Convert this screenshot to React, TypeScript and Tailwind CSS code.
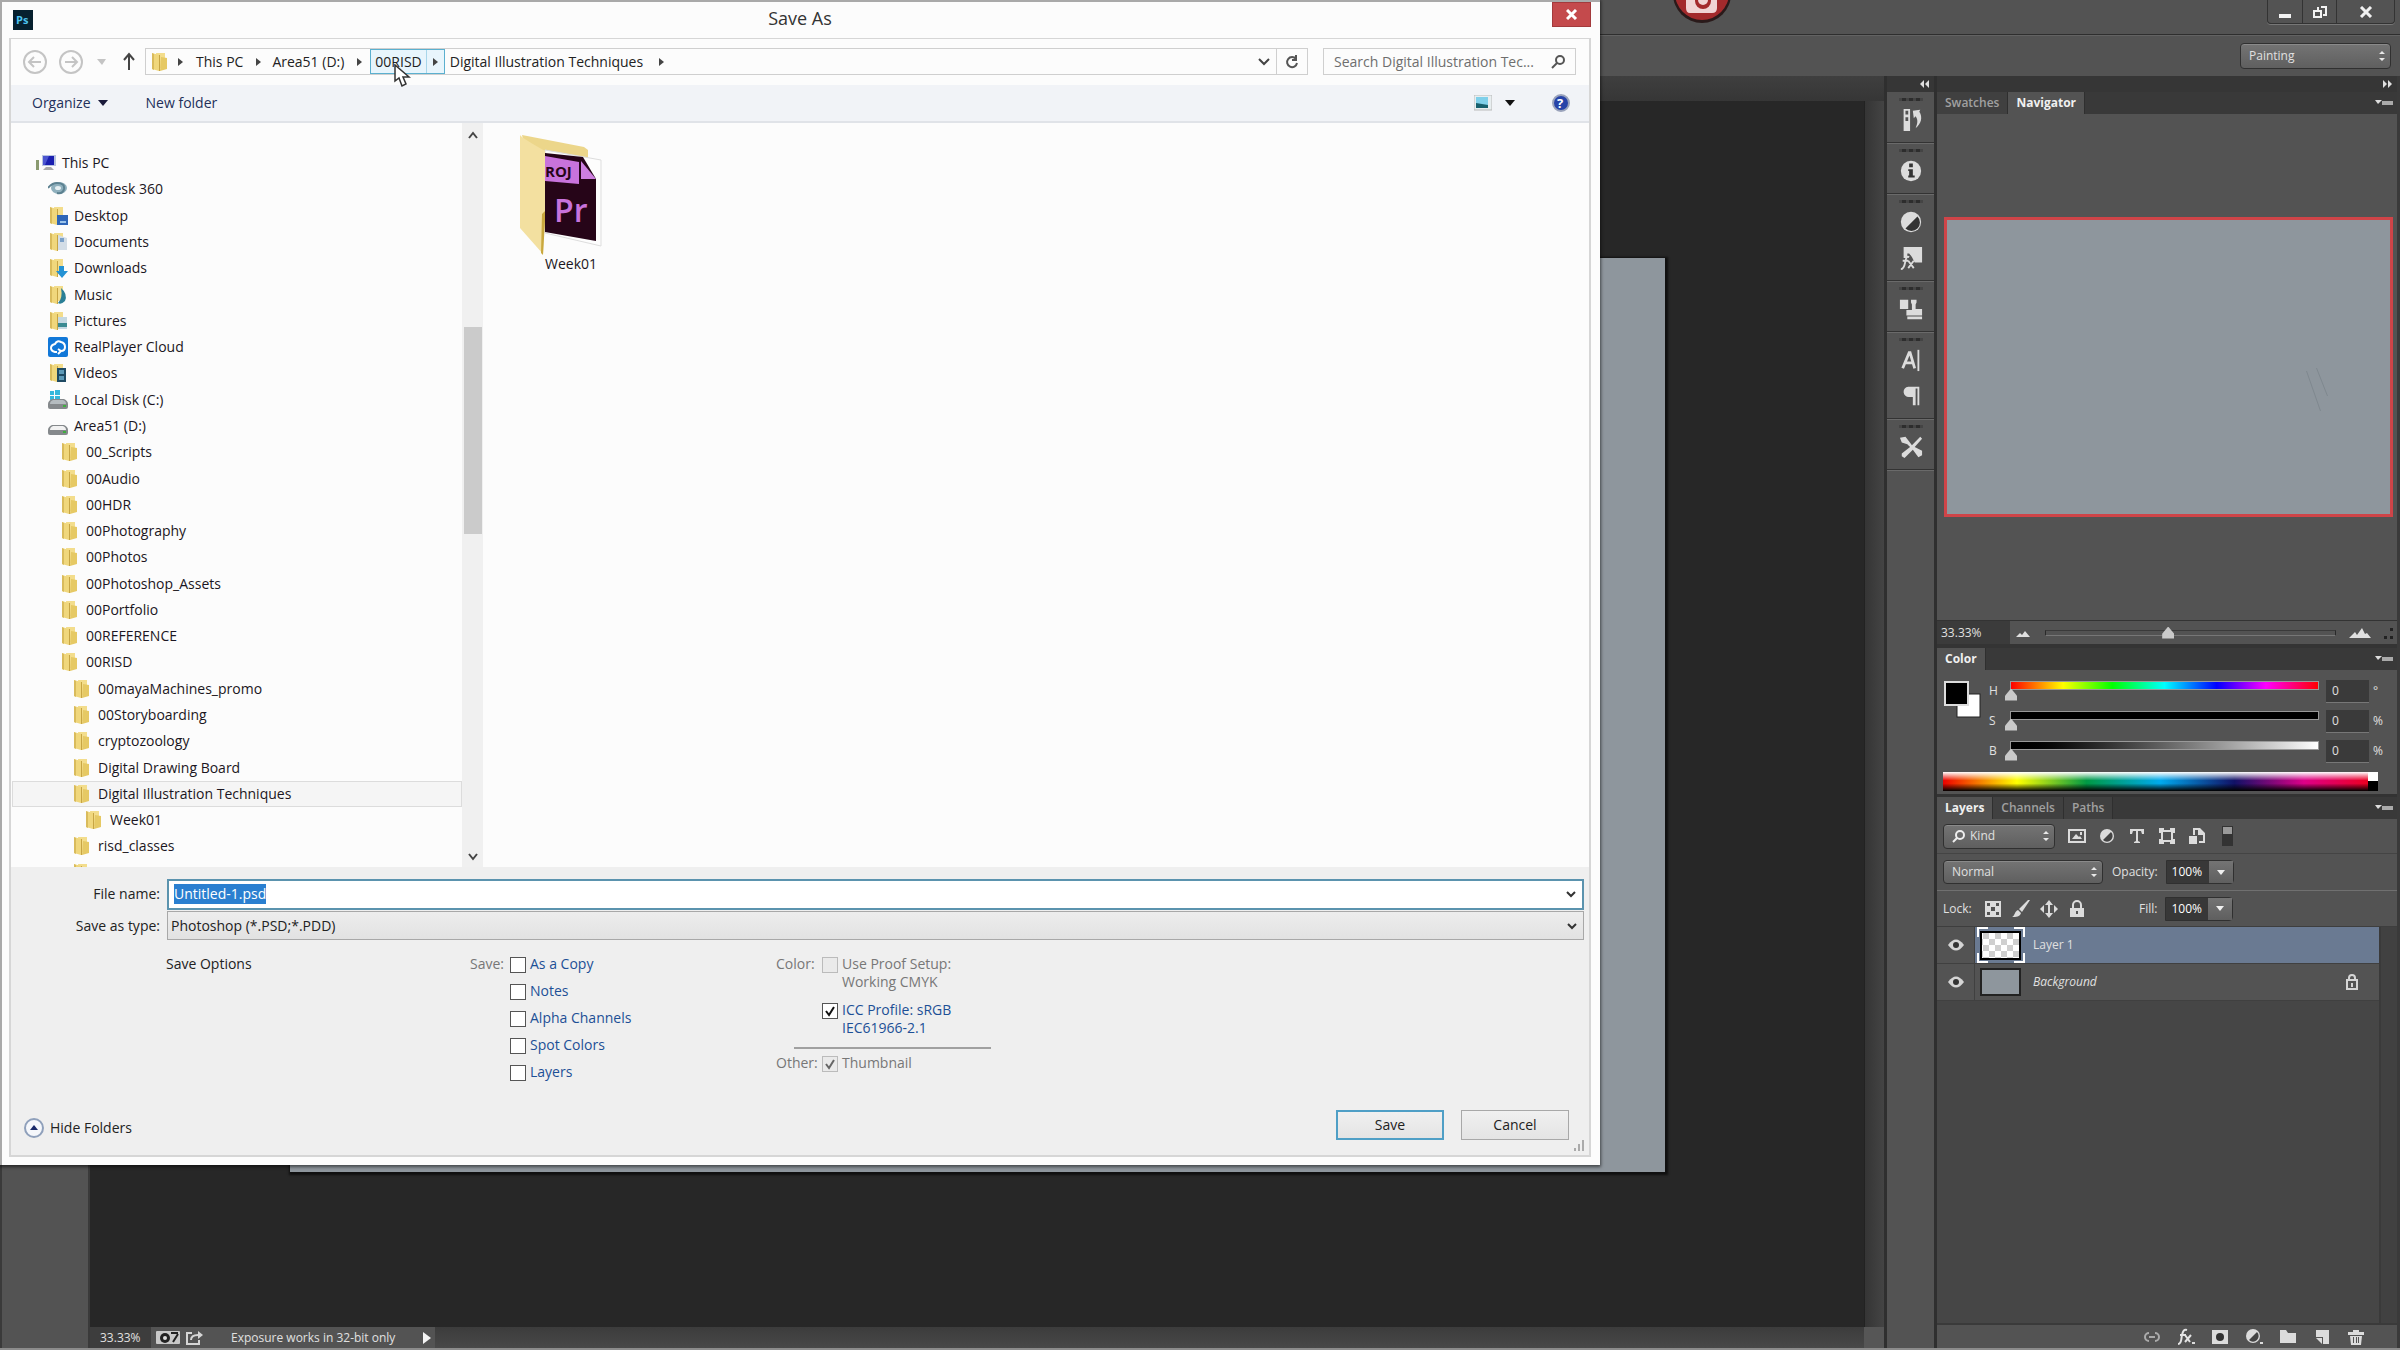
import { useEffect, useRef } from 'react';
import type { ReactNode } from 'react';

type TreeItem = { label: string; level: number; icon: string; selected?: boolean };

const tree: TreeItem[] = [
  { label: 'This PC', level: 0, icon: 'pc' },
  { label: 'Autodesk 360', level: 1, icon: 'autodesk' },
  { label: 'Desktop', level: 1, icon: 'desktop' },
  { label: 'Documents', level: 1, icon: 'documents' },
  { label: 'Downloads', level: 1, icon: 'downloads' },
  { label: 'Music', level: 1, icon: 'music' },
  { label: 'Pictures', level: 1, icon: 'pictures' },
  { label: 'RealPlayer Cloud', level: 1, icon: 'realplayer' },
  { label: 'Videos', level: 1, icon: 'videos' },
  { label: 'Local Disk (C:)', level: 1, icon: 'diskc' },
  { label: 'Area51 (D:)', level: 1, icon: 'disk' },
  { label: '00_Scripts', level: 2, icon: 'folder' },
  { label: '00Audio', level: 2, icon: 'folder' },
  { label: '00HDR', level: 2, icon: 'folder' },
  { label: '00Photography', level: 2, icon: 'folder' },
  { label: '00Photos', level: 2, icon: 'folder' },
  { label: '00Photoshop_Assets', level: 2, icon: 'folder' },
  { label: '00Portfolio', level: 2, icon: 'folder' },
  { label: '00REFERENCE', level: 2, icon: 'folder' },
  { label: '00RISD', level: 2, icon: 'folder' },
  { label: '00mayaMachines_promo', level: 3, icon: 'folder' },
  { label: '00Storyboarding', level: 3, icon: 'folder' },
  { label: 'cryptozoology', level: 3, icon: 'folder' },
  { label: 'Digital Drawing Board', level: 3, icon: 'folder' },
  { label: 'Digital Illustration Techniques', level: 3, icon: 'folder', selected: true },
  { label: 'Week01', level: 4, icon: 'folder' },
  { label: 'risd_classes', level: 3, icon: 'folder' },
  { label: 'risd_Teaching', level: 3, icon: 'folder' },
];

const indent = ['pl-[23px]', 'pl-[35px]', 'pl-[47px]', 'pl-[59px]', 'pl-[71px]'];

export default function App() {
  return (
    <main className="relative h-screen min-h-[1200px] flex flex-col overflow-hidden bg-[#535353] font-['Open_Sans','Noto_Sans',sans-serif] text-xs text-[#e0e0e0] border-b-2 border-[#8c8c8c]">
      <TopBars />
      <div className="flex flex-1 min-h-0">
        <div className="w-[90px] shrink-0 border-x-2 border-[#3a3a3a]" />
        <DocumentArea />
        <IconDock />
        <Panels />
      </div>
      <SaveDialog />
    </main>
  );
}

/* ---------- Photoshop chrome ---------- */

function TopBars() {
  return (
    <header className="shrink-0">
      <div className="relative flex justify-end h-[34px] pr-[5px]">
        <svg className="absolute left-[1672px] top-0" width="60" height="26" viewBox="0 0 60 26">
          <circle cx="30" cy="-6" r="29" fill="#2a1a1a" />
          <circle cx="30" cy="-7" r="27" fill="#a32a2c" />
          <path d="M14 0h31v8q0 5-5 5H18q-4 0-4-5z" fill="#f0d4d4" />
          <circle cx="31" cy="1" r="8" fill="#a32a2c" />
          <circle cx="31" cy="0" r="5" fill="#f0d4d4" />
        </svg>
        <div className="flex h-6 border border-t-0 border-[#333] rounded-b-sm shadow-[0_1px_0_#777]">
          <button aria-label="Minimize" className="w-[35px] grid place-items-center border-r border-[#333]">
            <svg width="14" height="14"><rect x="1" y="9" width="12" height="4" fill="#f2f2f2" /></svg>
          </button>
          <button aria-label="Restore" className="w-[34px] grid place-items-center border-r border-[#333]">
            <svg width="16" height="14" fill="none" stroke="#f2f2f2" strokeWidth="2"><path d="M2 6h7v6H2zM6 5V2M9 2h5v8h-3" /></svg>
          </button>
          <button aria-label="Close Photoshop" className="w-[57px] grid place-items-center">
            <svg width="14" height="12" stroke="#f2f2f2" strokeWidth="3"><path d="M2 1l10 10M12 1L2 11" /></svg>
          </button>
        </div>
      </div>
      <div className="flex items-center justify-end h-[42px] pr-[9px] border-t border-[#2e2e2e] shadow-[inset_0_1px_0_#626262]">
        <DarkSelect label="Workspace" value="Painting" className="w-[151px] h-[26px]" />
      </div>
    </header>
  );
}

function DarkSelect({ label, value, className, icon }: { label: string; value: string; className: string; icon?: ReactNode }) {
  return (
    <div className={'relative flex items-center rounded-sm border border-[#303030] bg-linear-to-b from-[#747474] to-[#5f5f5f] shadow-[inset_0_1px_0_#8a8a8a] ' + className}>
      {icon}
      <select aria-label={label} className="flex-1 h-full w-full appearance-none bg-transparent pl-2 outline-none">
        <option>{value}</option>
      </select>
      <svg className="absolute right-1 pointer-events-none" width="8" height="14" fill="#e8e8e8"><path d="M4 2l3 3H1zM4 12L1 9h6z" /></svg>
    </div>
  );
}

function DocumentArea() {
  return (
    <section className="flex flex-1 flex-col min-w-0">
      <div className="h-[25px] shrink-0 bg-linear-to-b from-[#3f3f3f] to-[#363636]" />
      <div className="flex flex-1 min-h-0">
        <div className="flex-1 min-w-0 bg-[#272727] pt-[157px] pb-[155px] pl-[200px] pr-[199px]">
          <div className="h-full bg-[#8e969d] shadow-[1px_1px_2px_2px_#101010]" />
        </div>
        <div className="w-5 shrink-0 bg-linear-to-r from-[#353535] to-[#444] border-l border-[#222]" />
      </div>
      <div className="flex h-[21px] shrink-0 bg-linear-to-b from-[#3c3c3c] to-[#484848]">
        <input aria-label="Zoom level" defaultValue="33.33%" className="w-[61px] pl-[10px] bg-[#3d3d3d] outline-none" />
        <div className="flex items-center w-[284px] bg-[#535353] pl-[5px]">
          <svg width="24" height="14"><rect width="24" height="13" rx="1" fill="#c9c9c9" /><circle cx="9" cy="7" r="5" fill="#222" /><circle cx="9" cy="7" r="2" fill="#ddd" /><path d="M15 2h7M17 11l5-8" stroke="#222" strokeWidth="2" /></svg>
          <svg className="ml-[6px]" width="18" height="15" fill="none" stroke="#d5d5d5" strokeWidth="2"><path d="M6 3H1v11h12v-4M5 10c0-4 3-5 7-5" /><path d="M12 1l5 4-5 4z" fill="#d5d5d5" stroke="none" /></svg>
          <span className="ml-[27px] text-xs whitespace-nowrap">Exposure works in 32-bit only</span>
          <svg className="ml-auto mr-1" width="8" height="12"><path d="M0 0l8 6-8 6z" fill="#f5f5f5" /></svg>
        </div>
        <div className="ml-auto w-5 bg-[#565656]" />
      </div>
    </section>
  );
}

function DockGroup({ children }: { children: ReactNode }) {
  return (
    <div className="flex flex-col items-center pt-[5px] pb-[4px] border-b border-[#333] shadow-[0_1px_0_#6a6a6a]">
      <svg width="24" height="5" fill="#2d2d2d"><path d="M0 1h24v3H0z" fill="#444" /><path d="M3 1h4v3H3zM10 1h4v3h-4zM17 1h4v3h-4z" /></svg>
      {children}
    </div>
  );
}

function DockButton({ label, children }: { label: string; children: ReactNode }) {
  return (
    <button aria-label={label} className="grid place-items-center size-9">
      <svg width="24" height="24" viewBox="0 0 26 26" fill="#dcdcdc">{children}</svg>
    </button>
  );
}

function IconDock() {
  return (
    <aside className="w-[53px] shrink-0 flex flex-col border-x-3 border-[#2f2f2f]">
      <div className="flex items-center justify-end h-4 pr-1 shrink-0 bg-[#363636]">
        <svg width="10" height="8" fill="#e0e0e0"><path d="M4 0v8L0 4zM9 0v8L5 4z" /></svg>
      </div>
      <DockGroup>
        <DockButton label="History">
          <path d="M5 1h7v24H5zM7 3v4h3V3zM7 10v4h3v-4z" fillRule="evenodd" />
          <path d="M15 3l8-1-1 2c4 6 2 13-4 18 2-5 3-9 0-13l-2 2z" />
        </DockButton>
      </DockGroup>
      <DockGroup>
        <DockButton label="Info">
          <circle cx="13" cy="13" r="11" />
          <path d="M11 5h4v4h-4zM10 11h5v7h2v2h-7v-2h1v-5h-1z" fill="#333" />
        </DockButton>
      </DockGroup>
      <DockGroup>
        <DockButton label="Adjustments">
          <circle cx="13" cy="13" r="11" />
          <path d="M20 7a9 9 0 0 1-13 13z" fill="#333" />
        </DockButton>
        <DockButton label="Styles">
          <path d="M5 1h20v17h-8l-3-6-3-4H9v5H5z" />
          <path d="M2 25c4 0 4-5 5-9s2-5 4-4M4 16h6M10 24l6-8M10 16l6 8" fill="none" stroke="#dcdcdc" strokeWidth="2" />
        </DockButton>
      </DockGroup>
      <DockGroup>
        <DockButton label="Clone source">
          <path d="M1 3h9v10H1zM13 3h6v3l-1 2v5h7v7H8v-6h6V8l-1-2zM9 21h16v3H9z" />
        </DockButton>
      </DockGroup>
      <DockGroup>
        <DockButton label="Character">
          <path d="M4 22l7-17h1l5 17M7 16h8" fill="none" stroke="#dcdcdc" strokeWidth="3" />
          <path d="M20 2h2v23h-2z" />
        </DockButton>
        <DockButton label="Paragraph">
          <path d="M10 3h12v20h-2V5h-2v18h-3v-9h-4a5 5 0 0 1-1-11z" />
        </DockButton>
      </DockGroup>
      <DockGroup>
        <DockButton label="Tool presets">
          <path d="M1 3l6-1 4 5 3 4 9-9 2 2-8 9 8 4v5l-4 2-6-8-9 9-3-2v-3l9-7-3-3-6-2z" />
        </DockButton>
      </DockGroup>
    </aside>
  );
}

function PanelTabs({ tabs, active }: { tabs: string[]; active: string }) {
  return (
    <div className="flex h-[22px] shrink-0 bg-[#393939]">
      {tabs.map(t => (
        <button
          key={t}
          className={'px-2 text-xs border-r border-[#2f2f2f] ' + (t === active ? 'font-bold bg-[#535353] text-[#f0f0f0]' : 'font-semibold bg-[#404040] text-[#a0a0a0]')}
        >
          {t}
        </button>
      ))}
      <button aria-label="Panel menu" className="ml-auto mr-1">
        <svg width="18" height="8"><path d="M0 1h7L3 5z" fill="#ddd" /><path d="M7 2h11v4H7z" fill="#aaa" /></svg>
      </button>
    </div>
  );
}

const rangeThumb =
  'appearance-none bg-transparent w-full h-[12px] outline-none [&::-webkit-slider-thumb]:appearance-none [&::-webkit-slider-thumb]:w-[12px] [&::-webkit-slider-thumb]:h-[12px] [&::-webkit-slider-thumb]:bg-[#c9c9c9] [&::-webkit-slider-thumb]:[clip-path:polygon(50%_0,100%_60%,100%_100%,0_100%,0_60%)]';

const colorRows = [
  { label: 'H', unit: '°', track: 'bg-[linear-gradient(90deg,#f00,#ff0_17%,#0f0_33%,#0ff_50%,#00f_67%,#f0f_83%,#f00)]' },
  { label: 'S', unit: '%', track: 'bg-black' },
  { label: 'B', unit: '%', track: 'bg-linear-to-r from-black to-white' },
];

function Panels() {
  return (
    <aside className="w-[463px] shrink-0 flex flex-col border-r-3 border-[#3a3a3a]">
      <div className="flex items-center justify-end h-4 pr-1 shrink-0 bg-[#363636]">
        <svg width="10" height="8" fill="#e0e0e0"><path d="M0 0v8l4-4zM5 0v8l4-4z" /></svg>
      </div>

      <PanelTabs tabs={['Swatches', 'Navigator']} active="Navigator" />
      <div className="h-[507px] shrink-0 flex items-center border-b border-[#333] pl-[7px] pr-[4px]">
        <svg className="w-full h-[300px] border-3 border-[#cf4448] bg-[#8e969d]" viewBox="0 0 442 294">
          <path d="M359 151l14 40M369 148l11 28" stroke="#7f888f" strokeWidth="1" fill="none" />
        </svg>
      </div>
      <div className="flex items-center h-[23px] shrink-0 pr-1">
        <input aria-label="Navigator zoom" defaultValue="33.33%" className="w-[73px] h-full pl-[4px] bg-[#3b3b3b] outline-none" />
        <svg className="mx-[6px]" width="14" height="8" fill="#e0e0e0"><path d="M0 8l4-4 2 2 3-4 5 6z" /></svg>
        <div className="flex-1 relative mx-[9px] flex items-center">
          <div className="absolute inset-x-0 h-[6px] border border-t-[#3a3a3a] border-x-[#2a2a2a] border-b-[#777]" />
          <input aria-label="Zoom" type="range" min="0" max="100" defaultValue="42" className={'relative ' + rangeThumb} />
        </div>
        <svg className="mx-[4px]" width="22" height="10" fill="#e0e0e0"><path d="M0 10l6-6 2 3 5-7 3 6 2-1 4 5z" /></svg>
        <svg className="ml-2 self-end mb-1" width="10" height="12" fill="#222"><path d="M7 0h3v3H7zM7 8h3v3H7zM1 8h3v3H1z" /></svg>
      </div>

      <div className="pt-[4px] bg-[#343434]"><PanelTabs tabs={['Color']} active="Color" /></div>
      <div className="h-[127px] shrink-0 px-[6px] pt-[6px] border-b-3 border-[#333]">
        <div className="flex h-[96px]">
          <svg className="mt-1" width="40" height="42"><rect x="14" y="14" width="23" height="23" fill="#fff" stroke="#222" /><rect x="2" y="2" width="23" height="23" fill="#000" stroke="#ddd" strokeWidth="2" /></svg>
          <div className="flex-1">
            {colorRows.map(r => (
              <div key={r.label} className="flex items-center h-[30px]">
                <label htmlFor={'ch-' + r.label} className="w-[22px] pl-[6px]">{r.label}</label>
                <div className="flex-1 mr-[2px]">
                  <div className={'h-[7px] mx-[6px] outline outline-[#999] ' + r.track} />
                  <input id={'ch-' + r.label} type="range" min="0" max="100" defaultValue="0" className={'block ' + rangeThumb} />
                </div>
                <input aria-label={r.label + ' value'} defaultValue="0" className="w-[43px] h-[23px] pl-[6px] bg-[#3a3a3a] border-b border-[#777] outline-none" />
                <span className="w-[22px] pl-[4px]">{r.unit}</span>
              </div>
            ))}
          </div>
        </div>
        <div className="flex h-[19px] mr-[13px] bg-[linear-gradient(180deg,#fff,transparent_45%,transparent_60%,#000),linear-gradient(90deg,#e00,#ff0_17%,#094_33%,#0ae_50%,#116_67%,#d08_83%,#e01)]">
          <div className="ml-auto w-[10px] bg-linear-to-b from-white from-50% to-black to-50%" />
        </div>
      </div>

      <LayersPanel />
    </aside>
  );
}

function PercentField({ label }: { label: string }) {
  return (
    <label className="flex items-center gap-[8px]">
      {label}
      <span className="flex h-[24px] border border-[#303030] rounded-r-sm">
        <input defaultValue="100%" className="w-[42px] pl-[5px] bg-[#383838] text-white outline-none" />
        <span className="w-[24px] grid place-items-center bg-linear-to-b from-[#747474] to-[#5f5f5f]">
          <svg width="8" height="5" fill="#f0f0f0"><path d="M0 0h8L4 5z" /></svg>
        </span>
      </span>
    </label>
  );
}

function IconButton({ label, children }: { label: string; children: ReactNode }) {
  return (
    <button aria-label={label}>
      <svg className="block" width="18" height="18" viewBox="0 0 18 18" fill="#dcdcdc">{children}</svg>
    </button>
  );
}

function LayersPanel() {
  return (
    <section className="flex flex-1 flex-col min-h-0">
      <PanelTabs tabs={['Layers', 'Channels', 'Paths']} active="Layers" />
      <div className="flex items-center gap-[12px] h-[35px] pl-[6px] shrink-0 border-b border-[#444]">
        <DarkSelect
          label="Filter type"
          value="Kind"
          className="w-[112px] h-[25px] mr-[1px]"
          icon={<svg className="ml-2 -mr-1" width="14" height="14" fill="none" stroke="#eee" strokeWidth="2"><circle cx="8" cy="6" r="4" /><path d="M5 9l-4 4" /></svg>}
        />
        <IconButton label="Pixel layers"><path d="M0 2h18v14H0zM2 4v10h14V4zM4 12l4-5 3 3 1-1 2 3zM12 5h2v3h-2z" fillRule="evenodd" /></IconButton>
        <IconButton label="Adjustment layers"><circle cx="9" cy="9" r="7" /><path d="M13 5a5 5 0 0 1-8 8z" fill="#444" /></IconButton>
        <IconButton label="Type layers"><path d="M2 2h14v5h-2l-1-3h-3v10l2 1v1H6v-1l2-1V4H5L4 7H2z" /></IconButton>
        <IconButton label="Shape layers"><path d="M1 1h5v2h6V1h5v5h-2v6h2v5h-5v-2H6v2H1v-5h2V6H1zM5 5v8h8V5z" fillRule="evenodd" /></IconButton>
        <IconButton label="Smart objects"><path d="M1 9h8v8H1zM5 8V1h7l5 5v10h-6v-2h4V8h-5V3H7v5z" /></IconButton>
        <button aria-label="Toggle filter" className="ml-1">
          <svg className="block" width="11" height="20"><path d="M0 0h11v20H0z" fill="#333" /><path d="M1 1h9v7H1z" fill="#999" /></svg>
        </button>
      </div>
      <div className="flex items-center gap-[9px] h-[37px] pl-[6px] shrink-0 border-b border-[#707070]">
        <DarkSelect label="Blend mode" value="Normal" className="w-[160px] h-[24px]" />
        <PercentField label="Opacity:" />
      </div>
      <div className="flex items-center gap-[10px] h-[36px] pl-[6px] shrink-0 border-b border-[#3e3e3e]">
        <span className="w-[31px]">Lock:</span>
        <IconButton label="Lock transparent pixels"><path d="M1 1h16v16H1zM3 3v3h3V3zM12 3v3h3V3zM7 7v4h4V7zM3 12v3h3v-3zM12 12v3h3v-3z" fillRule="evenodd" /></IconButton>
        <IconButton label="Lock image pixels"><path d="M18 0l-8 12-3-3L16 0zM6 10l3 3c-1 4-5 4-9 4 3-1 2-5 6-7z" /></IconButton>
        <IconButton label="Lock position"><path d="M9 0l4 5h-3v8h3l-4 5-4-5h3V5H5zM4 5v8L0 9zM14 5v8l4-4z" /></IconButton>
        <IconButton label="Lock all"><path d="M2 8h2V5a5 5 0 0 1 10 0v3h2v9H2zM6 8h6V5a3 3 0 0 0-6 0zM8 11v3h2v-3z" fillRule="evenodd" /></IconButton>
        <span className="w-[33px]" />
        <PercentField label="Fill:" />
      </div>
      <div className="flex flex-1 min-h-0 bg-[#464646]">
        <ul className="flex-1">
          <LayerRow name="Layer 1" selected />
          <LayerRow name="Background" locked />
        </ul>
        <div className="w-[18px] bg-[#414141] border-l-2 border-[#3a3a3a]" />
      </div>
      <div className="flex items-center justify-end gap-4 h-[25px] shrink-0 pr-[32px] border-t-2 border-[#3a3a3a]">
        <IconButton label="Link layers"><path d="M6 5a4 4 0 1 0 0 8M12 5a4 4 0 1 1 0 8M6 9h6" fill="none" stroke="#aaa" strokeWidth="2" /></IconButton>
        <IconButton label="Layer style">
          <path d="M1 16c4 0 3-5 4-9s2-6 5-5M3 7h6M8 14l6-7M8 7l5 7" fill="none" stroke="#e4e4e4" strokeWidth="2" /><path d="M15 14h3v2h-3z" />
        </IconButton>
        <IconButton label="Add layer mask"><path d="M1 2h16v14H1z" /><circle cx="9" cy="9" r="4" fill="#333" /></IconButton>
        <IconButton label="New adjustment layer"><circle cx="8" cy="8" r="7" /><path d="M12 4a5 5 0 0 1-8 8z" fill="#444" /><path d="M15 14h3v2h-3z" /></IconButton>
        <IconButton label="New group"><path d="M1 2h6l2 3h8v10H1z" /></IconButton>
        <IconButton label="New layer"><path d="M3 2h13v14h-6V9H3z" /><path d="M3 10l6 6V10z" /></IconButton>
        <IconButton label="Delete layer"><path d="M6 2h6v2h5v3H1V4h5zM3 8h12l-1 9H4zM6 9v6h1V9zM9 9v6h1V9zM12 9v6h-1V9z" fillRule="evenodd" /></IconButton>
      </div>
    </section>
  );
}

function LayerRow({ name, selected, locked }: { name: string; selected?: boolean; locked?: boolean }) {
  return (
    <li className="flex h-[37px] bg-[#535353] border-b border-[#404040]">
      <button aria-label={'Toggle ' + name} className="w-[38px] grid place-items-center border-r border-[#404040]">
        <svg width="16" height="12"><path d="M0 6q8-11 16 0-8 11-16 0z" fill="#d5d5d5" /><circle cx="8" cy="6" r="3" fill="#333" /></svg>
      </button>
      <div className={'flex flex-1 items-center pl-[2px] ' + (selected ? 'bg-[#6a7a92]' : '')}>
        {selected ? (
          <svg width="48" height="36">
            <path d="M1 10V1h10M37 1h10v9M47 26v9H37M11 35H1v-9" fill="none" stroke="#fff" strokeWidth="2" />
            <defs>
              <pattern id="checker" width="12" height="12" patternUnits="userSpaceOnUse">
                <rect width="12" height="12" fill="#fff" />
                <path d="M0 0h6v6H0zM6 6h6v6H6z" fill="#cfcfcf" />
              </pattern>
            </defs>
            <rect x="4" y="5" width="39" height="27" fill="url(#checker)" stroke="#000" strokeWidth="2" />
          </svg>
        ) : (
          <svg width="48" height="36"><rect x="4" y="5" width="39" height="26" fill="#8e969d" stroke="#222" strokeWidth="2" /></svg>
        )}
        <span className={'ml-2 ' + (locked ? 'italic' : '')}>{name}</span>
        {locked && (
          <svg className="ml-auto mr-5" width="14" height="16" fill="none" stroke="#d5d5d5" strokeWidth="2"><path d="M2 6h10v9H2zM4 6V4a3 3 0 0 1 6 0v2M7 9v4" /></svg>
        )}
      </div>
    </li>
  );
}

/* ---------- Save As dialog ---------- */

function SaveDialog() {
  return (
    <section
      role="dialog"
      aria-labelledby="save-as-title"
      className="absolute left-0 top-0 bottom-[183px] w-2/3 flex flex-col bg-[#fcfcfc] text-sm text-[#1b1622] border-l-2 border-t-2 border-[#a9a9a9] shadow-[0_1px_3px_1px_#0008] pl-[7px] pr-[9px] pb-[8px]"
    >
      <div className="flex items-center h-[36px] shrink-0">
        <div className="flex-1 pl-[4px]">
          <svg width="20" height="20"><rect width="20" height="20" fill="#06202f" /><text x="3" y="14" fontSize="11" fontWeight="bold" fill="#4cc3f0">Ps</text></svg>
        </div>
        <h1 id="save-as-title" className="mr-1 mb-1 text-lg text-[#333]">Save As</h1>
        <div className="flex-1 flex justify-end self-start">
          <button aria-label="Close" className="grid place-items-center w-[39px] h-[25px] bg-[#c44a4c] border border-[#a33a3c]">
            <svg width="12" height="11" stroke="#fff" strokeWidth="3"><path d="M1 1l9 9M10 1L1 10" /></svg>
          </button>
        </div>
      </div>

      <div className="flex flex-1 flex-col min-h-0 border-2 border-t border-[#d6d6d6]">
        <AddressRow />
        <div className="flex items-center h-[38px] shrink-0 bg-[#f1f3f7] border-b-2 border-[#e0e3e8] pl-[21px] pr-[19px] text-[#23305a]">
          <button className="flex items-center gap-[7px]">
            Organize
            <svg width="10" height="6" fill="#1a1a3a"><path d="M0 0h10L5 6z" /></svg>
          </button>
          <button className="ml-[38px]">New folder</button>
          <button aria-label="Change view" className="ml-auto flex items-center gap-[13px]">
            <svg width="18" height="16"><rect x="0" y="0" width="18" height="15" fill="#e8eef0" stroke="#bbb" /><rect x="2" y="2" width="12" height="11" fill="#7fd0ea" /><path d="M2 8l6 1 6 1v3H2z" fill="#17606e" /></svg>
            <svg width="10" height="6" fill="#111"><path d="M0 0h10L5 6z" /></svg>
          </button>
          <button aria-label="Help" className="ml-[37px]">
            <svg width="18" height="18"><circle cx="9" cy="9" r="8" fill="#2743a8" stroke="#9aa3bb" strokeWidth="2" /><text x="5" y="14" fontSize="13" fontWeight="bold" fill="#fff">?</text></svg>
          </button>
        </div>
        <div className="flex flex-1 min-h-0">
          <nav className="w-[451px] shrink-0 overflow-hidden flex flex-col pt-[27px]">
            <ul className="flex-1 flex flex-col mb-[-19px]">
              {tree.map((t, i) => (
                <li key={i} className={'flex-1 flex items-center gap-[6px] ml-[1px] border whitespace-nowrap ' + indent[t.level] + ' ' + (t.selected ? 'bg-[#f5f5f5] border-[#dcdcdc]' : 'border-transparent')}>
                  <TreeIcon kind={t.icon} />
                  <a href="#folder">{t.label}</a>
                </li>
              ))}
            </ul>
          </nav>
          <div className="w-[21px] shrink-0 flex flex-col items-center bg-[#f0f0f0] pt-[8px] pb-[6px]">
            <svg width="12" height="8" fill="none" stroke="#444" strokeWidth="2"><path d="M2 7l4-5 4 5" /></svg>
            <div className="w-[18px] h-[207px] mt-[188px] bg-[#cbcbcb]" />
            <svg className="mt-auto" width="12" height="8" fill="none" stroke="#444" strokeWidth="2"><path d="M2 1l4 5 4-5" /></svg>
          </div>
          <div className="flex-1 pl-[36px] pt-[12px]">
            <button className="flex flex-col items-center w-[104px]">
              <FolderThumb />
              <span className="leading-4">Week01</span>
            </button>
          </div>
        </div>
        <SaveForm />
      </div>

      <svg className="absolute left-[391px] top-[62px]" width="20" height="28"><path d="M2 1v16l4-3 3 8 4-2-3-7h6z" fill="#fff" stroke="#333" strokeWidth="1.5" /></svg>
    </section>
  );
}

function Crumb({ children, arrow = 'ml-[13px] mr-[11px]' }: { children?: ReactNode; arrow?: string }) {
  return (
    <>
      {children}
      <svg className={arrow} width="5" height="8" fill="#444"><path d="M0 0l5 4-5 4z" /></svg>
    </>
  );
}

function AddressRow() {
  return (
    <div className="flex items-center h-[46px] shrink-0 pb-px pl-[10px] pr-[13px] text-[#333]">
      <svg width="132" height="26" fill="none" stroke="#c4c4c4" strokeWidth="2">
        <circle cx="14" cy="13" r="11" />
        <path d="M20 13H8M13 8l-5 5 5 5" />
        <circle cx="50" cy="13" r="11" />
        <path d="M44 13h12M51 8l5 5-5 5" />
        <path d="M76 10h9l-4 6z" fill="#c4c4c4" stroke="none" />
        <path d="M108 21V6M103 11l5-6 5 6" stroke="#444" />
      </svg>
      <div className="flex flex-1 items-center h-[27px] -ml-[8px] border border-[#cfcfcf]">
        <div className="flex flex-1 items-center h-full pl-[4px] whitespace-nowrap text-[#222]">
          <TreeIcon kind="folder" />
          <Crumb arrow="ml-[8px] mr-[13px]" />
          <Crumb><a href="#pc">This PC</a></Crumb>
          <Crumb><a href="#area51">Area51 (D:)</a></Crumb>
          <span className="flex items-center h-full -ml-[3px] border border-[#5bb0cf] bg-[#e8f5fc]">
            <a href="#risd" className="px-[4px] h-full flex items-center border-r border-[#a8d6ea]">00RISD</a>
            <svg className="mx-[6px]" width="5" height="8" fill="#444"><path d="M0 0l5 4-5 4z" /></svg>
          </span>
          <span className="ml-[5px] flex items-center"><Crumb arrow="ml-[16px]"><a href="#dit">Digital Illustration Techniques</a></Crumb></span>
        </div>
        <button aria-label="Previous locations" className="px-[6px]">
          <svg width="12" height="9" fill="none" stroke="#444" strokeWidth="2"><path d="M1 2l5 5 5-5" /></svg>
        </button>
        <button aria-label="Refresh" className="grid place-items-center w-[31px] h-full border-l border-[#cfcfcf]">
          <svg width="14" height="14" fill="none" stroke="#555" strokeWidth="2"><path d="M11 4a5 5 0 1 0 1 4M11 0v5H7" /></svg>
        </button>
      </div>
      <label className="flex items-center w-[253px] h-[27px] ml-[15px] pl-[10px] pr-[9px] border border-[#cfcfcf]">
        <input aria-label="Search" placeholder="Search Digital Illustration Tec..." className="flex-1 min-w-0 bg-transparent outline-none placeholder:text-[#6e6e6e]" />
        <svg width="15" height="14" fill="none" stroke="#555" strokeWidth="2"><circle cx="9" cy="5" r="4" /><path d="M6 8l-5 5" /></svg>
      </label>
    </div>
  );
}

function TreeIcon({ kind }: { kind: string }) {
  if (kind === 'pc') {
    return <svg width="20" height="18"><path d="M6 1h14v11H6z" fill="#b8c4e0" /><path d="M7 2h11v9H7z" fill="#1a1fb0" /><path d="M7 2h6L9 11H7z" fill="#4b55d0" /><path d="M0 6h3v10H0z" fill="#8a9a70" /><path d="M10 13h5l3 3H7z" fill="#aaa" /></svg>;
  }
  if (kind === 'autodesk') {
    return <svg width="20" height="18"><ellipse cx="11" cy="8" rx="8" ry="6" fill="#8fb0bd" /><path d="M0 8q4-5 9-5 8 0 7 6-1 5-7 4" fill="none" stroke="#5c8190" strokeWidth="2" /><ellipse cx="10" cy="8" rx="3" ry="2" fill="#e6eff2" /></svg>;
  }
  if (kind === 'realplayer') {
    return <svg width="20" height="20"><rect width="20" height="20" rx="2" fill="#1278d8" /><path d="M9 15H7q-4-1-4-4t4-4q2-4 6-2 4 1 4 5t-4 4l-3-2M13 14l-3 3" fill="none" stroke="#fff" strokeWidth="2" /></svg>;
  }
  if (kind === 'disk' || kind === 'diskc') {
    return (
      <svg width="20" height="20">
        {kind === 'diskc' && <path d="M2 1h4v4H2zM7 0h5v5H7zM2 6h4v4H2zM7 6h5v5H7z" fill="#35b8dc" />}
        <path d="M4 9h12q4 2 4 5v3q0 2-2 2H2q-2 0-2-2v-3q0-3 4-5z" fill="#85898c" />
        <path d="M5 10h10q3 1 3 4H2q0-3 3-4z" fill={kind === 'disk' ? '#f2f2f2' : '#b5bcc0'} />
        <path d="M15 15h3v2h-3z" fill="#3fae3f" />
      </svg>
    );
  }
  return (
    <svg width="20" height="20">
      <path d="M6 1h9v15H8z" fill="#f3dd8c" />
      <path d="M2 1l7 2v16l-7-2z" fill="#f0d77c" />
      <path d="M2 1l2 1v16l-2-1z" fill="#d9bb5c" />
      <path d="M9 3h1v16H9z" fill="#c7a544" />
      {kind === 'folder' && <path d="M11 5l6 1v11l-7 2z" fill="#e6c964" />}
      {kind === 'desktop' && <path d="M9 9h11v10H9z" fill="#2f66b8" />}
      {kind === 'desktop' && <path d="M12 15h6v2h-6z" fill="#9cc4ea" />}
      {kind === 'documents' && <path d="M10 3l9 3v12h-9z" fill="#d3dde6" />}
      {kind === 'documents' && <path d="M12 6h4v4h-4z" fill="#7aa0c8" />}
      {kind === 'downloads' && <path d="M11 8h5v5h4l-6 7-6-7h3z" fill="#2492d4" />}
      {kind === 'music' && <path d="M13 3q7 6 4 13-4 4-7 2 5-5 3-15z" fill="#2a7f96" />}
      {kind === 'pictures' && <path d="M10 6h9v12h-9z" fill="#c4d8e2" />}
      {kind === 'pictures' && <path d="M10 12h9v4h-9z" fill="#3a8a92" />}
      {kind === 'videos' && <path d="M9 5h9v14H9z" fill="#1f4a63" />}
      {kind === 'videos' && <path d="M11 7h5v4h-5zM11 13h5v4h-5z" fill="#5d9ab8" />}
    </svg>
  );
}

function FolderThumb() {
  return (
    <svg width="104" height="121" viewBox="10 0 104 121">
      <path d="M13 0l62 12 4 3v80H36z" fill="#ecd68a" />
      <path d="M36 15l56 10v86l-56-13z" fill="#fdfdfd" stroke="#ddd" />
      <path d="M36 18l38 4 13 22v62l-51-9z" fill="#260518" />
      <path d="M36 21l34 6v22l-34-3z" fill="#c873dc" />
      <path d="M72 26l15 18H72z" fill="#cd7fe0" />
      <text x="36" y="42" fontSize="15" fontWeight="bold" fill="#260518">ROJ</text>
      <text x="45" y="87" fontSize="32" fontWeight="600" fill="#c873dc">Pr</text>
      <path d="M11 0q2 3 25 16v60l-2 43L11 93z" fill="#f3e0a0" />
      <path d="M36 16v60l-3 3-1 39 2 2 2-34z" fill="#c9a83e" />
    </svg>
  );
}

function Check({ id, label, checked, disabled }: { id: string; label: ReactNode; checked?: boolean; disabled?: boolean }) {
  return (
    <div className={'flex gap-1 leading-[18px] ' + (disabled ? 'text-[#777]' : 'text-[#1d4f96]')}>
      <span className="relative w-4 h-4 mt-[2px]">
        <input
          id={id}
          type="checkbox"
          defaultChecked={checked}
          disabled={disabled}
          className="block appearance-none w-4 h-4 border border-[#555] bg-white disabled:bg-[#eaeaea] disabled:border-[#bbb]"
        />
        {checked && (
          <svg className="absolute left-[3px] top-[3px] pointer-events-none" width="11" height="11" fill="none" stroke={disabled ? '#666' : '#111'} strokeWidth="2"><path d="M1 5l3 4 5-8" /></svg>
        )}
      </span>
      <label htmlFor={id}>{label}</label>
    </div>
  );
}

function SaveForm() {
  const fileName = useRef<HTMLInputElement>(null);

  // The name is selected when the dialog opens
  useEffect(() => {
    fileName.current?.focus();
    fileName.current?.select();
  }, []);

  return (
    <form className="relative shrink-0 bg-[#efefef] pt-[11px] text-[#222]" onSubmit={e => e.preventDefault()}>
      <div className="flex items-center h-[32px] pr-[5px]">
        <label htmlFor="file-name" className="w-[156px] pr-[7px] text-right">File name:</label>
        <div className="flex-1 flex items-center h-[31px] bg-white border-2 border-[#5b93ae] pl-[5px] pr-[6px]">
          <input
            id="file-name"
            ref={fileName}
            defaultValue="Untitled-1.psd"
            className="flex-1 outline-none selection:bg-[#2a7fd0] selection:text-white"
          />
          <svg width="10" height="8" fill="none" stroke="#333" strokeWidth="2"><path d="M1 2l4 4 4-4" /></svg>
        </div>
      </div>
      <div className="flex items-center h-[31px] pr-[5px]">
        <label htmlFor="file-type" className="w-[156px] pr-[7px] text-right">Save as type:</label>
        <div className="relative flex-1 flex items-center h-[29px] border border-[#a8a8a8] bg-linear-to-b from-[#ededed] to-[#e2e2e2]">
          <select id="file-type" className="w-full h-full appearance-none bg-transparent pl-[3px] outline-none">
            <option>Photoshop (*.PSD;*.PDD)</option>
          </select>
          <svg className="absolute right-[6px] pointer-events-none" width="10" height="8" fill="none" stroke="#333" strokeWidth="2"><path d="M1 2l4 4 4-4" /></svg>
        </div>
      </div>
      <div className="flex items-start pt-[14px] pl-[155px] h-[153px] leading-[18px]">
        <div className="w-[304px]">Save Options</div>
        <div className="w-[40px] text-[#777]">Save:</div>
        <div className="w-[266px] flex flex-col gap-[9px]">
          <Check id="as-copy" label="As a Copy" />
          <Check id="notes" label="Notes" />
          <Check id="alpha" label="Alpha Channels" />
          <Check id="spot" label="Spot Colors" />
          <Check id="layers" label="Layers" />
        </div>
        <div className="flex flex-col gap-[10px] text-[#777]">
          <div className="flex">
            <span className="w-[46px]">Color:</span>
            <Check id="proof" disabled label={<>Use Proof Setup:<br />Working CMYK</>} />
          </div>
          <div className="pl-[46px]">
            <Check id="icc" checked label={<>ICC Profile: sRGB<br />IEC61966-2.1</>} />
          </div>
          <div className="flex border-t-2 border-[#a0a0a0] ml-[18px] -mr-[40px] pt-[5px]">
            <span className="-ml-[18px] w-[46px]">Other:</span>
            <Check id="thumb" checked disabled label="Thumbnail" />
          </div>
        </div>
      </div>
      <div className="flex items-center h-[61px] pl-[13px] pr-[20px] gap-[17px]">
        <button type="button" className="flex items-center gap-[6px] mr-auto pt-[6px]">
          <svg width="20" height="20"><circle cx="10" cy="10" r="9" fill="#f5f7fb" stroke="#8fa0bb" strokeWidth="2" /><path d="M6 12l4-5 4 5z" fill="#1a2a6a" /></svg>
          Hide Folders
        </button>
        <button type="submit" className="w-[108px] h-[30px] border-2 border-[#4f9fc6] bg-linear-to-b from-[#f0f0f0] to-[#e4e4e4]">Save</button>
        <button type="button" className="w-[108px] h-[30px] border border-[#a8a8a8] bg-linear-to-b from-[#f0f0f0] to-[#e4e4e4]">Cancel</button>
      </div>
      <svg className="absolute right-1 bottom-1" width="11" height="11" fill="#aaa"><path d="M8 0h2v11H8zM4 4h2v7H4zM0 8h2v3H0z" /></svg>
    </form>
  );
}
